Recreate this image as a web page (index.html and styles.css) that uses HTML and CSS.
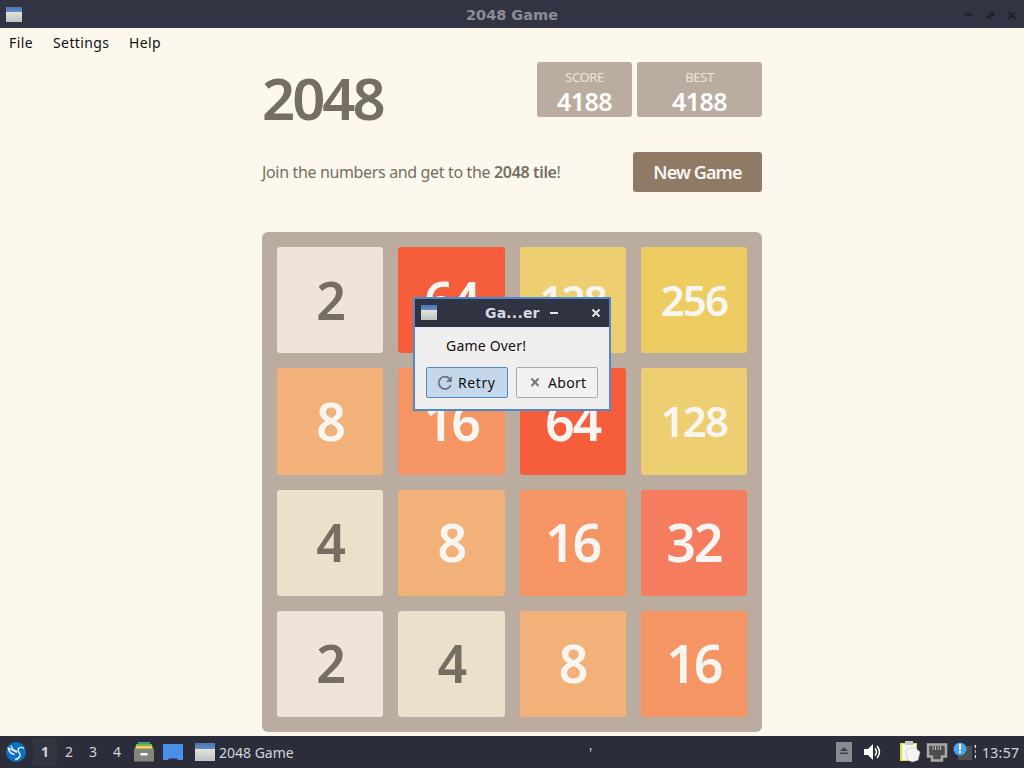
FILE: index.html
```html
<!DOCTYPE html>
<html lang="en">
<head>
  <meta charset="UTF-8">
  <title>2048 Game</title>
  <link rel="stylesheet" href="styles.css">
</head>
<body>

  <header class="titlebar">
    <span class="win-icon"></span>
    <span class="title">2048 Game</span>
    <svg class="win-buttons" width="56" height="12" viewBox="0 0 56 12">
      <path d="M0 6.500h8M21 8.500h4v3M26 4v3h3M25 8l4-4M43 4l7 7M50 4l-7 7"/>
    </svg>
  </header>

  <nav class="menubar">
    <span class="file">File</span>
    <span class="settings">Settings</span>
    <span class="help">Help</span>
  </nav>

  <main class="game">
    <div class="heading">
      <h1>2048</h1>
      <div class="score"><small>SCORE</small><b>4188</b></div>
      <div class="score best"><small>BEST</small><b>4188</b></div>
    </div>
    <div class="intro">
      <p>Join the numbers and get to the <strong>2048 tile</strong>!</p>
      <button class="new-game">New Game</button>
    </div>
    <div class="board">
      <div class="tile t2">2</div>
      <div class="tile t64">64</div>
      <div class="tile t128">128</div>
      <div class="tile t256">256</div>
      <div class="tile t8">8</div>
      <div class="tile t16">16</div>
      <div class="tile t64">64</div>
      <div class="tile t128">128</div>
      <div class="tile t4">4</div>
      <div class="tile t8">8</div>
      <div class="tile t16">16</div>
      <div class="tile t32">32</div>
      <div class="tile t2">2</div>
      <div class="tile t4">4</div>
      <div class="tile t8">8</div>
      <div class="tile t16">16</div>
    </div>
  </main>

  <div class="dialog">
    <div class="dialog-title">
      <span class="win-icon"></span>
      <span class="dialog-name">Ga...er</span>
      <svg class="dialog-buttons" width="54" height="12" viewBox="0 0 54 12">
        <path d="M1 6h8M43.500 2.500l7 7M50.500 2.500l-7 7"/>
      </svg>
    </div>
    <p>Game Over!</p>
    <div class="dialog-actions">
      <button class="retry">
        <svg width="16" height="16" viewBox="0 0 16 16"><path d="M13.800 10A6.200 6.200 0 1 1 12.500 3.500" fill="none" stroke="#6b7480" stroke-width="1.800"/><path d="M14.800 1v6H8.800z" fill="#6b7480"/></svg>
        <span>Retry</span>
      </button>
      <button class="abort">
        <svg width="16" height="16" viewBox="0 0 16 16"><path d="M4.500 3.500l7 7.500M11.500 3.500l-7 7.500" stroke="#777" stroke-width="2"/></svg>
        <span>Abort</span>
      </button>
    </div>
  </div>

  <footer class="taskbar">
    <svg class="start" width="22" height="22" viewBox="0 0 22 22">
      <circle cx="11" cy="11" r="10" fill="#0d6fc4"/>
      <path d="M3 6.500c1 4.500 3 6.500 6.500 7M6 4.500c.5 3.500 2.500 5 6 6M3.500 7l8.500 4.500M19 7.500c-3-2-6-1-6 1.500 0 2 2.500 3 2 5.500-.5 2-2.500 3.500-5 4" fill="none" stroke="#e8f3fc" stroke-width="1.400"/>
    </svg>
    <div class="desktops"><b>1</b><span>2</span><span>3</span><span>4</span></div>
    <svg class="files" width="20" height="20" viewBox="0 0 20 20">
      <path d="M4 0h12v3H4z" fill="#3f9a8a"/><path d="M2 2h16v3H2z" fill="#7fae4e"/><path d="M1.500 4h17v3h-17z" fill="#efd75c"/><path d="M0 6.500h20v13H0z" fill="#85857f"/><path d="M6.500 11h7v2.500h-7z" fill="#fff"/>
    </svg>
    <svg class="desktop-icon" width="20" height="17" viewBox="0 0 20 17"><path d="M0 0h20v16h-5l-1-1.500H6L5 16H0z" fill="#4a8fe7"/></svg>
    <div class="task"><span class="win-icon"></span><span>2048 Game</span></div>
    <span class="tick">'</span>
    <svg class="tray" width="140" height="24" viewBox="0 0 140 24">
      <path d="M0 2h16v20H0z" fill="#8b8c8f"/><path d="M4 11l4-4 4 4zM4 12.500h8V14H4z" fill="#44464d"/>
      <path d="M28 9h4l5-5v16l-5-5h-4z" fill="#fff"/><path d="M39 8.500q3 3.500 0 7M41 6q5 6 0 12" fill="none" stroke="#fff" stroke-width="1.500"/>
      <path d="M64 3h17v18H64z" fill="#e4dc3c"/><path d="M66 4h14v16H66z" fill="#f5f5f0"/><path d="M69 1h8v4h-8z" fill="#c9c9c5"/><path d="M70 10l8-3 6 5-2 8-6 2-5-3z" fill="#f4f4f4" stroke="#c5c5c5" stroke-width=".6"/>
      <path d="M92 4.500h18v12h-4v4H96v-4h-4z" fill="#4b4c4d" stroke="#a9a9a6" stroke-width="2.500"/><path d="M97 6v4M99.500 6v4M102 6v4M104.500 6v4" stroke="#bbb"/>
      <path d="M122 6h14v14h-14z" fill="#4c5150"/><circle cx="124" cy="9" r="6.500" fill="#4aa5ea"/><path d="M123 4h2v6h-2zM123 11h2v2h-2z" fill="#fff"/>
      <path d="M139 5q2 7 0 14" fill="none" stroke="#ddd" stroke-width="1.500" stroke-dasharray="3 2"/>
    </svg>
    <span class="clock">13:57</span>
  </footer>

</body>
</html>
```

FILE: styles.css
```css
* {
  box-sizing: border-box;
}
body {
  margin: 0;
  height: 768px;
  overflow: hidden;
  display: flex;
  flex-direction: column;
  position: relative;
  background: #fcf8ee;
  color: #756e61;
  font-family: "Noto Sans", sans-serif;
}
h1, p {
  margin: 0;
}
.titlebar {
  height: 28px;
  padding: 0 3px 0 6px;
  display: flex;
  align-items: center;
  justify-content: space-between;
  background: #323443;
}
.win-icon {
  width: 16px;
  height: 15px;
  flex: none;
  background: linear-gradient(#4d75b2 0, #648bc3 32%, #e3e4df 34%, #bfc2bd 100%);
}
.title {
  margin-left: 37px;
  padding-top: 1px;
  color: #8a8d98;
  font: bold 14.5px "DejaVu Sans", sans-serif;
}
.win-buttons {
  fill: none;
  stroke: #1d202b;
  stroke-width: 2;
}
.menubar {
  height: 30px;
  padding: 0 0 2px 9px;
  display: flex;
  align-items: center;
  color: #111;
  font-size: 14px;
  letter-spacing: 0.4px;
}
.menubar span {
  white-space: nowrap;
}
.file {
  width: 44px;
}
.settings {
  width: 76px;
}

.game {
  width: 500px;
  height: 678px;
  margin: 0 auto;
  padding-top: 4px;
}
.heading {
  height: 90px;
  display: flex;
  align-items: flex-start;
  gap: 5px;
}
h1 {
  margin-right: auto;
  font-size: 58px;
  font-weight: 600;
  line-height: 72px;
  letter-spacing: -3px;
}
.score {
  width: 95px;
  height: 55px;
  padding-top: 7px;
  border-radius: 3px;
  background: #baad9f;
  color: #fff;
  text-align: center;
}
.best {
  width: 125px;
}
.score small {
  display: block;
  color: #eee4da;
  font-size: 13px;
  line-height: 17px;
  letter-spacing: -0.4px;
}
.score b {
  display: block;
  font-size: 25px;
  font-weight: 600;
  line-height: 30px;
  letter-spacing: -0.6px;
}
.intro {
  height: 80px;
  display: flex;
  align-items: flex-start;
  justify-content: space-between;
}
.intro p {
  font-size: 16px;
  line-height: 40px;
  white-space: nowrap;
  letter-spacing: -0.35px;
}
.intro strong {
  font-weight: 600;
}
.new-game {
  width: 129px;
  height: 40px;
  padding: 0;
  border: 0;
  border-radius: 3px;
  background: #8f7a66;
  color: #f9f6f2;
  font: 600 18px "Noto Sans", sans-serif;
  letter-spacing: -0.9px;
}
.board {
  height: 500px;
  padding: 15px;
  border-radius: 6px;
  display: grid;
  grid-template: repeat(4, 1fr) / repeat(4, 1fr);
  gap: 15px;
  background: #baad9f;
}
.tile {
  padding-bottom: 2px;
  display: flex;
  align-items: center;
  justify-content: center;
  border-radius: 3px;
  color: #f9f6f2;
  font-size: 52px;
  font-weight: 600;
  letter-spacing: -2px;
}
.t2 {
  background: #eee4da;
  color: #756e61;
}
.t4 {
  background: #ebe0ca;
  color: #756e61;
}
.t8 {
  background: #f2b179;
}
.t16 {
  background: #f59563;
}
.t32 {
  background: #f67c5f;
}
.t64 {
  background: #f65e3b;
}
.t128 {
  background: #edcf72;
  font-size: 42px;
}
.t256 {
  background: #edcc61;
  font-size: 42px;
}

/* game over dialog */
.dialog {
  position: absolute;
  left: 413px;
  top: 297px;
  width: 198px;
  height: 114px;
  border: 2px solid #5089ca;
  background: #efefef;
  color: #111;
  font-size: 14px;
  letter-spacing: 0.2px;
}
.dialog-title {
  height: 28px;
  padding: 0 2px 1px 6px;
  display: flex;
  align-items: center;
  background: #2f3342;
}
.dialog-name {
  margin-left: 48px;
  width: 64px;
  color: #d7dae2;
  font: bold 14px "DejaVu Sans", sans-serif;
}
.dialog-buttons {
  fill: none;
  stroke: #e4e6ec;
  stroke-width: 2;
}
.dialog p {
  padding-left: 31px;
  line-height: 38px;
}
.dialog-actions {
  padding: 2px 11px;
  display: flex;
  gap: 8px;
}
.dialog-actions button {
  width: 82px;
  height: 31px;
  padding: 0 0 0 10px;
  display: flex;
  align-items: center;
  gap: 5px;
  border: 1px solid #aaa;
  border-radius: 2px;
  background: #f1f1f1;
  color: #111;
  font: 14px "Noto Sans", sans-serif;
  letter-spacing: 0.6px;
}
.dialog-actions .retry {
  border-color: #5089ca;
  background: #c5d8eb;
}
.dialog-actions .abort {
  letter-spacing: 0.3px;
}

.taskbar {
  height: 32px;
  padding-left: 5px;
  display: flex;
  align-items: center;
  background: #2b2e3a;
  color: #d3d5db;
  font-size: 14px;
}
.start {
  margin-right: 6px;
}
.desktops {
  display: flex;
}
.desktops > * {
  width: 24px;
  line-height: 28px;
  text-align: center;
}
.desktops b {
  background: #323540;
}
.files {
  margin: 0 9px 0 5px;
}
.task {
  width: 394px;
  margin-left: 12px;
  display: flex;
  align-items: center;
  gap: 4px;
}
.task .win-icon {
  width: 20px;
  height: 18px;
}
.tick {
  width: 247px;
}
.clock {
  margin-left: 6px;
  letter-spacing: 0.3px;
}
```
